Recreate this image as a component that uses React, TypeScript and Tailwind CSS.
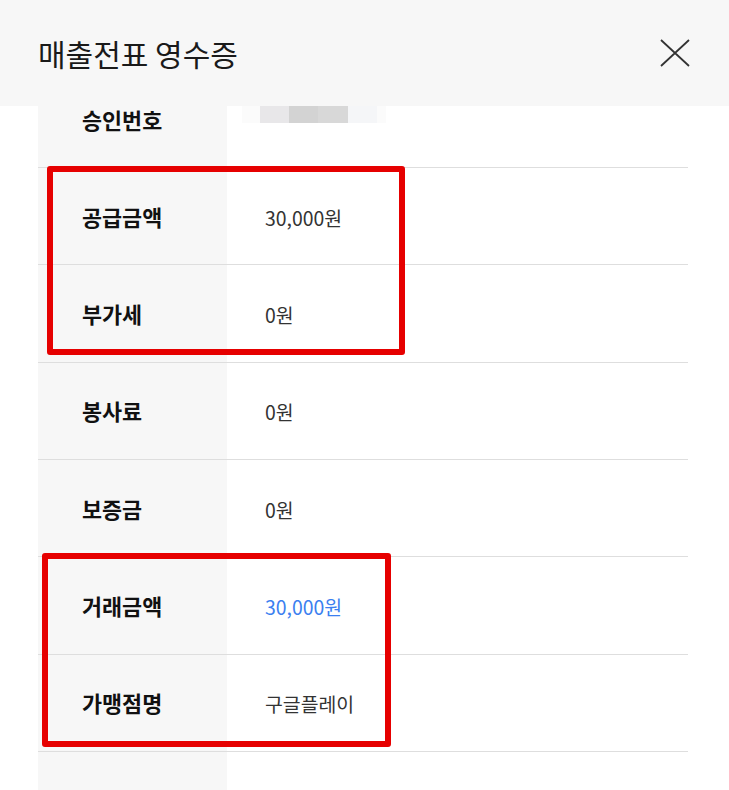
import React from "react";

interface Row {
  label: string;
  value?: string;
  accent?: boolean;
}

const rows: Row[] = [
  { label: "공급금액", value: "30,000원" },
  { label: "부가세", value: "0원" },
  { label: "봉사료", value: "0원" },
  { label: "보증금", value: "0원" },
  { label: "거래금액", value: "30,000원", accent: true },
  { label: "가맹점명", value: "구글플레이" },
  { label: "" },
];

const font = { fontFamily: '"Noto Sans CJK KR", "Noto Sans", sans-serif' };

// blurred approval number, only its lower half shows under the header
const MaskedValue = () => (
  <div className="flex w-fit h-[17px] -ml-[23px] pl-[18px] pr-[9px] bg-[#fbfbfb]">
    <div className="w-[29px] bg-[#e8e7e9]" />
    <div className="w-[29px] bg-[#d3d3d3]" />
    <div className="w-[30px] bg-[#d8d8d8]" />
    <div className="w-[29px] bg-[#f5f6f8]" />
  </div>
);

export default function App() {
  return (
    <div className="relative w-[729px] h-[790px] overflow-hidden bg-white" style={font}>
      <header className="h-[106px] bg-[#f7f7f7] flex items-center justify-between pl-[38px] pr-[39px]">
        <h1 className="text-[30px] font-normal text-[#1a1a1a] leading-none">매출전표 영수증</h1>
        <button className="w-[30px] h-[28px] text-[#333]" aria-label="닫기">
          <svg width="30" height="28" viewBox="0 0 30 28" fill="none">
            <path d="M1 1L29 27M29 1L1 27" stroke="currentColor" strokeWidth="1.8" />
          </svg>
        </button>
      </header>

      <div className="pl-[38px] pr-[41px]">
        <div className="flex h-[62px] border-b border-[#dedede]">
          <div className="w-[189px] shrink-0 bg-[#f7f7f7] pl-[44px] pt-[1px] text-[21.8px] leading-[26px] font-bold text-[#111]">
            승인번호
          </div>
          <div className="flex-1 pl-[38px]">
            <MaskedValue />
          </div>
        </div>
        {rows.map((row, i) => (
          <div key={i} className="flex h-[97.33px] border-b border-[#dedede]">
            <div className="w-[189px] shrink-0 bg-[#f7f7f7] pl-[44px] flex items-center pt-[2px] text-[21.8px] font-bold text-[#111]">
              {row.label}
            </div>
            <div
              className={`flex-1 pl-[38px] flex items-center pt-[2px] text-[19.4px] ${
                row.accent ? "text-[#3b7ff0]" : "text-[#333]"
              }`}
            >
              {row.value}
            </div>
          </div>
        ))}
      </div>

      {/* highlight boxes drawn over the table */}
      <div className="absolute left-[47px] top-[166px] w-[358px] h-[189px] border-[6px] border-[#e60000] rounded-[3px]" />
      <div className="absolute left-[42px] top-[553px] w-[349px] h-[194px] border-[6px] border-[#e60000] rounded-[3px]" />
    </div>
  );
}
